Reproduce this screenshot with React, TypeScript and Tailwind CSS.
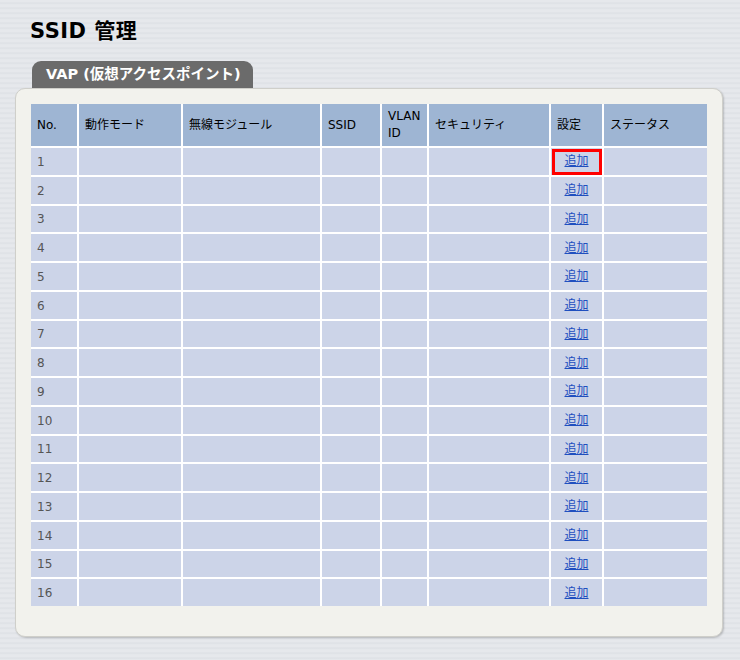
const columns = [
  { label: "No.", w: "w-[46px]" },
  { label: "動作モード", w: "w-[102px]" },
  { label: "無線モジュール", w: "w-[137px]" },
  { label: "SSID", w: "w-[58px]" },
  { label: "VLAN ID", w: "w-[45px]" },
  { label: "セキュリティ", w: "w-[120px]" },
  { label: "設定", w: "w-[51px]" },
  { label: "ステータス", w: "w-[103px]" },
];

const rows = Array.from({ length: 16 }, (_, i) => i + 1);

export default function App() {
  return (
    <div className="w-[740px] h-[660px] overflow-hidden bg-[#e3e6eb] bg-[repeating-linear-gradient(180deg,#e6e8ec_0px,#e6e8ec_2px,#dcdfe4_3px,#e3e6ea_4px,#e6e8ec_5px)] font-['DejaVu_Sans','Noto_Sans_CJK_JP',sans-serif] text-black">
      <h1 className="pl-[30px] pt-[17px] text-[21px] font-bold leading-[28px] tracking-[0.5px]">SSID 管理</h1>

      <div className="mt-[16px] ml-[32px] w-[221px] h-[27px] rounded-t-[9px] bg-[#6b6b6b] pl-[14px] flex items-center text-white text-[14.5px] font-bold">
        VAP (仮想アクセスポイント)
      </div>

      <div className="ml-[15px] w-[708px] h-[549px] rounded-[10px] border border-[#cfcfca] bg-[#f2f2ed] shadow-[1px_1px_2px_rgba(0,0,0,0.2)] pt-[15px] pl-[15px]">
        <div className="w-[676px] flex flex-col gap-[2px] bg-white text-[12px]">
          <div className="flex gap-[2px]">
            {columns.map((c) => (
              <div
                key={c.label}
                className={`${c.w} h-[42px] shrink-0 bg-[#9eb5d3] px-[6px] flex items-center leading-[17px]`}
              >
                {c.label}
              </div>
            ))}
          </div>
          {rows.map((n) => (
            <div key={n} className="flex gap-[2px]">
              {columns.map((c, ci) => (
                <div
                  key={c.label}
                  className={`${c.w} h-[26.75px] shrink-0 bg-[#ccd4e8] relative flex items-center ${ci === 6 ? "justify-center" : "px-[6px]"}`}
                >
                  {ci === 0 && <span className="text-[#555] pt-[1px]">{n}</span>}
                  {ci === 6 && (
                    <a href="#" className="text-[#1f4fbf] underline">追加</a>
                  )}
                  {ci === 6 && n === 1 && (
                    <div className="absolute top-[1px] bottom-0 left-[1px] right-0 border-[3px] border-[#ff0000]" />
                  )}
                </div>
              ))}
            </div>
          ))}
        </div>
      </div>
    </div>
  );
}
